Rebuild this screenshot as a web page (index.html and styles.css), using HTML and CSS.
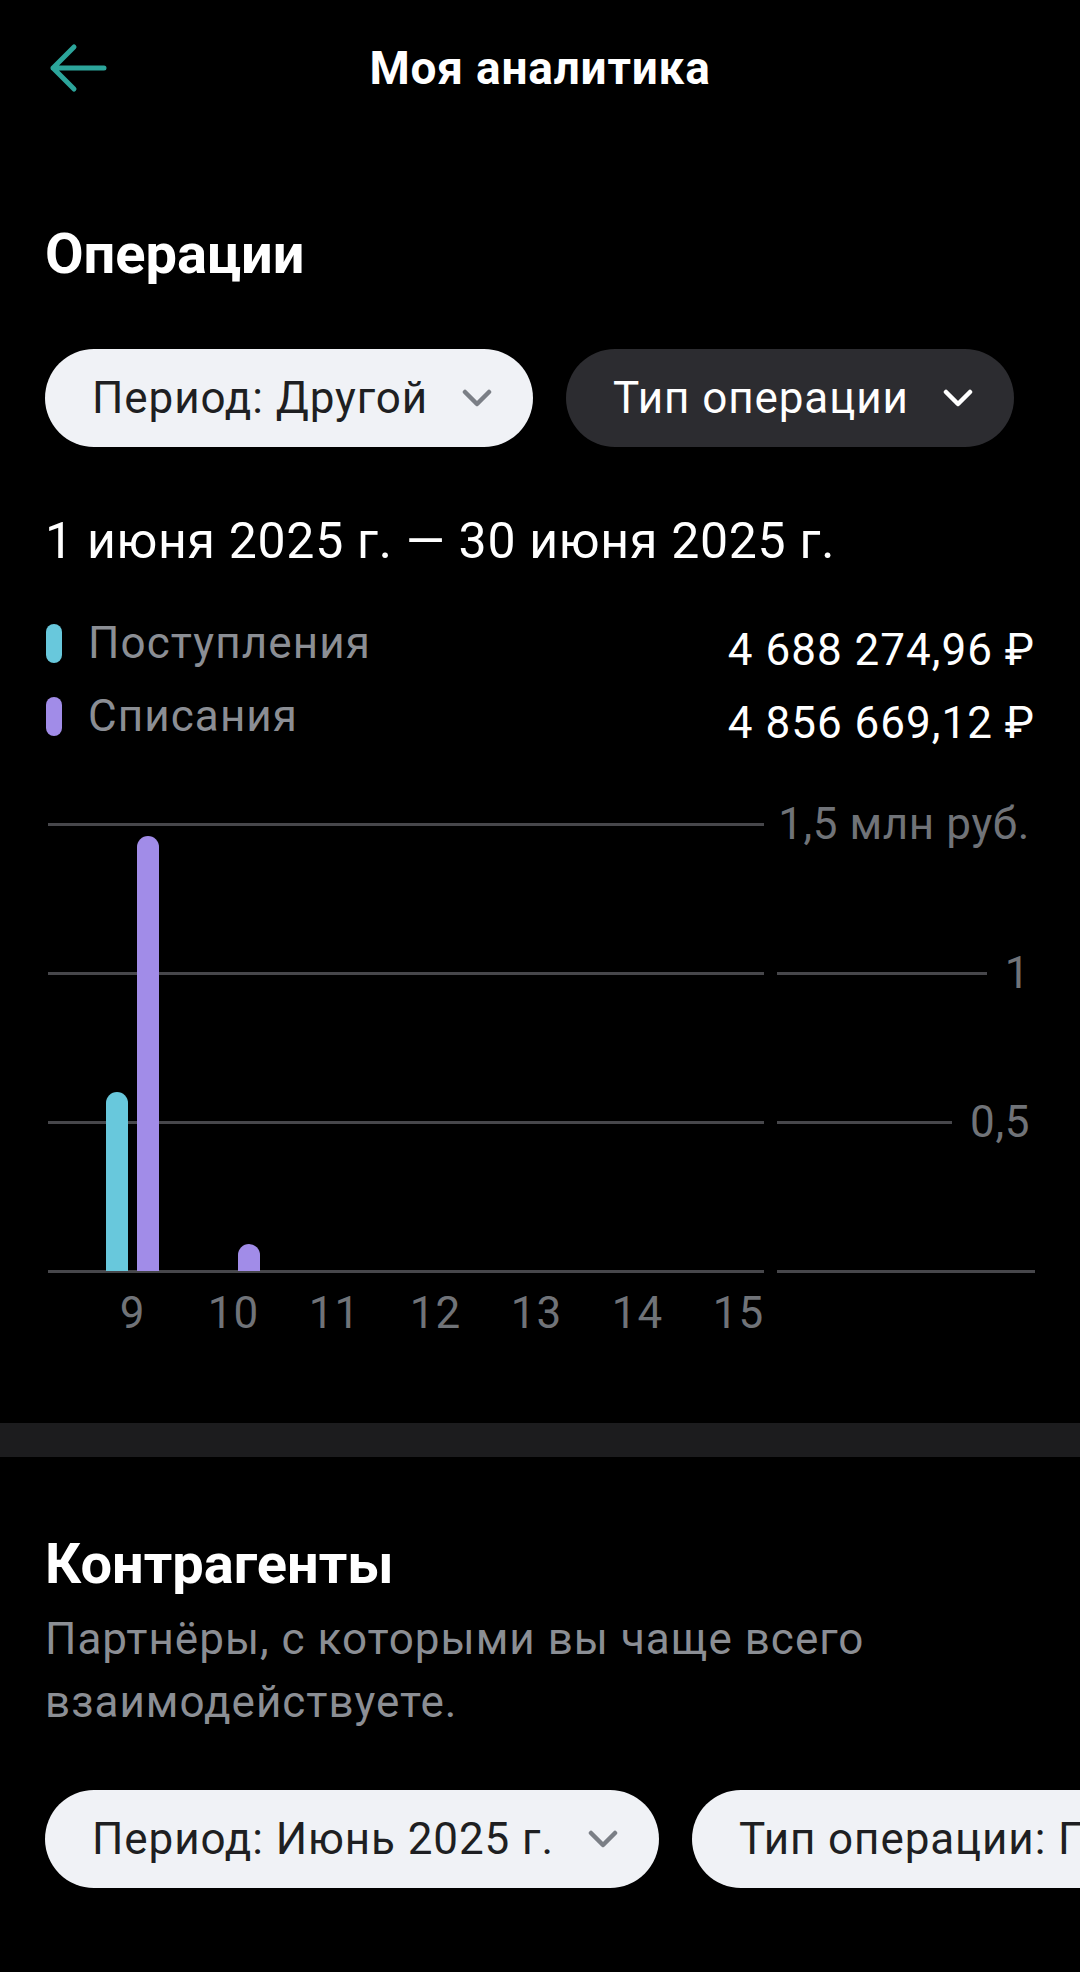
FILE: index.html
```html
<!DOCTYPE html>
<html lang="ru">
<head>
    <meta charset="UTF-8">
    <title>Моя аналитика</title>
    <link rel="stylesheet" href="styles.css">
</head>
<body>
    <header class="topbar">
        <a class="back" href="#">
            <svg width="64" height="56" viewBox="0 0 64 56"><path d="M59 28H8M29 7L8 28l21 21" fill="none" stroke="#2ca59b" stroke-width="5" stroke-linecap="round" stroke-linejoin="round"/></svg>
        </a>
        <h1 class="title">Моя аналитика</h1>
        <span></span>
    </header>

    <section class="section">
        <h2 class="section-title">Операции</h2>
        <div class="filters">
            <button class="pill">Период: Другой
                <svg class="chev" width="30" height="18" viewBox="0 0 30 18"><path d="M3 3l12 12L27 3" fill="none" stroke="currentColor" stroke-width="4.5" stroke-linecap="round" stroke-linejoin="round"/></svg>
            </button>
            <button class="pill dark">Тип операции
                <svg class="chev" width="30" height="18" viewBox="0 0 30 18"><path d="M3 3l12 12L27 3" fill="none" stroke="currentColor" stroke-width="4.5" stroke-linecap="round" stroke-linejoin="round"/></svg>
            </button>
        </div>

        <div class="range">1 июня 2025 г. — 30 июня 2025 г.</div>

        <div class="legend">
            <div class="legend-row">
                <div class="legend-name"><span class="mark in"></span>Поступления</div>
                <div class="legend-sum">4 688 274,96 ₽</div>
            </div>
            <div class="legend-row">
                <div class="legend-name"><span class="mark out"></span>Списания</div>
                <div class="legend-sum">4 856 669,12 ₽</div>
            </div>
        </div>

        <div class="chart">
            <div class="grid">
                <div class="grid-row">
                    <div class="gl-left"></div>
                    <div class="gl-right end"><span class="tick">1,5 млн руб.</span></div>
                </div>
                <div class="grid-row">
                    <div class="gl-left"></div>
                    <div class="gl-right"><span class="line"></span><span class="tick">1</span></div>
                </div>
                <div class="grid-row">
                    <div class="gl-left"></div>
                    <div class="gl-right"><span class="line"></span><span class="tick">0,5</span></div>
                </div>
                <div class="grid-row">
                    <div class="gl-left"></div>
                    <div class="gl-right"><span class="line"></span></div>
                </div>
            </div>

            <div class="bars">
                <div class="day"><span class="bar in" style="height: 179px"></span><span class="bar out" style="height: 435px"></span></div>
                <div class="day"><span class="bar in" style="height: 0"></span><span class="bar out" style="height: 27px"></span></div>
                <div class="day"></div>
                <div class="day"></div>
                <div class="day"></div>
                <div class="day"></div>
                <div class="day"></div>
            </div>

            <div class="days">
                <span>9</span><span>10</span><span>11</span><span>12</span><span>13</span><span>14</span><span>15</span>
            </div>
        </div>
    </section>

    <div class="band"></div>

    <section class="section second">
        <h2 class="section-title">Контрагенты</h2>
        <p class="subtitle">Партнёры, с которыми вы чаще всего взаимодействуете.</p>
        <div class="filters scroll">
            <button class="pill">Период: Июнь 2025 г.
                <svg class="chev" width="30" height="18" viewBox="0 0 30 18"><path d="M3 3l12 12L27 3" fill="none" stroke="currentColor" stroke-width="4.5" stroke-linecap="round" stroke-linejoin="round"/></svg>
            </button>
            <button class="pill">Тип операции: Поступления
                <svg class="chev" width="30" height="18" viewBox="0 0 30 18"><path d="M3 3l12 12L27 3" fill="none" stroke="currentColor" stroke-width="4.5" stroke-linecap="round" stroke-linejoin="round"/></svg>
            </button>
        </div>
    </section>
</body>
</html>
```

FILE: styles.css
```css
body {
    margin: 0;
    background: #000;
    color: #fff;
    font-family: Roboto, "Noto Sans", sans-serif;
    overflow-x: hidden;
}

.topbar {
    height: 136px;
    padding: 0 45px;
    display: grid;
    grid-template-columns: 1fr auto 1fr;
    align-items: center;
}

.back {
    display: flex;
    align-items: center;
}

.title {
    margin: 0;
    font-size: 46px;
    line-height: 52px;
    font-weight: 700;
    letter-spacing: 0.8px;
}

.section {
    padding: 0 45px;
}

.section-title {
    margin: 85px 0 0;
    font-size: 56px;
    line-height: 66px;
    font-weight: 700;
}

.filters {
    margin-top: 62px;
    display: flex;
    gap: 33px;
}

.pill {
    flex: 0 0 auto;
    height: 98px;
    padding: 0 41px 0 47px;
    border: none;
    border-radius: 49px;
    background: #f0f2f6;
    color: #1e1f22;
    font-family: inherit;
    font-size: 44px;
    letter-spacing: 0.9px;
    display: flex;
    align-items: center;
    gap: 34px;
    white-space: nowrap;
}

.pill .chev {
    color: #7b7f86;
}

.pill.dark {
    background: #2c2c30;
    color: #fff;
}

.pill.dark .chev {
    color: #fff;
}

.range {
    margin-top: 66px;
    font-size: 50px;
    line-height: 56px;
    letter-spacing: 0.7px;
}

.legend {
    margin-top: 48px;
    display: flex;
    flex-direction: column;
    gap: 14px;
}

.legend-row {
    display: flex;
    justify-content: space-between;
    align-items: flex-start;
}

.legend-name {
    display: flex;
    align-items: center;
    gap: 26px;
    font-size: 44px;
    line-height: 52px;
    letter-spacing: 1.1px;
    color: #8b8e94;
}

.mark {
    width: 16px;
    height: 39px;
    border-radius: 8px;
    margin-left: 1px;
}

.mark.in, .bar.in {
    background: #68c8dc;
}

.mark.out, .bar.out {
    background: #a18ce8;
}

.legend-sum {
    margin-top: 7px;
    font-size: 44px;
    line-height: 52px;
    letter-spacing: 1px;
}

.chart {
    position: relative;
    margin-top: 55px;
}

.grid {
    display: flex;
    flex-direction: column;
    gap: 109px;
}

.grid-row {
    height: 40px;
    display: flex;
    align-items: center;
}

.gl-left {
    width: 716px;
    height: 3px;
    margin-left: 3px;
    background: #47474b;
}

.gl-right {
    flex: 1;
    margin-left: 13px;
    display: flex;
    align-items: center;
}

.gl-right.end {
    justify-content: flex-end;
}

.gl-right .line {
    flex: 1;
    height: 3px;
    background: #47474b;
}

.tick {
    margin-left: 18px;
    padding-right: 5px;
    font-size: 44px;
    line-height: 40px;
    letter-spacing: 0.6px;
    color: #707378;
    white-space: nowrap;
}

.gl-right.end .tick {
    margin-left: 0;
}

.bars {
    position: absolute;
    top: 0;
    left: 37px;
    height: 467px;
    display: flex;
    align-items: flex-end;
}

.day {
    width: 101px;
    display: flex;
    justify-content: center;
    align-items: flex-end;
    gap: 9px;
}

.bar {
    width: 22px;
    border-radius: 11px 11px 0 0;
}

.days {
    margin-left: 37px;
    display: flex;
    font-size: 44px;
    line-height: 44px;
    letter-spacing: 1px;
    color: #707378;
}

.days span {
    width: 101px;
    text-align: center;
}

.band {
    margin-top: 88px;
    height: 34px;
    background: #1c1c1e;
}

.second .section-title {
    margin-top: 74px;
}

.subtitle {
    margin: 11px 0 0;
    font-size: 44px;
    line-height: 63px;
    letter-spacing: 1px;
    color: #8b8e94;
}

.filters.scroll {
    margin-top: 56px;
}
```
